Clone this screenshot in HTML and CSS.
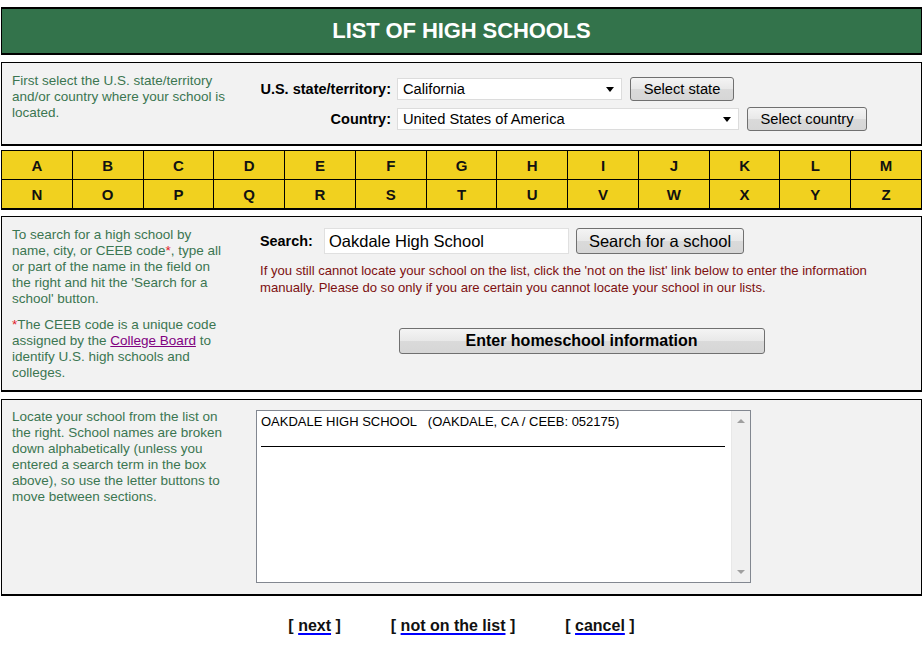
FILE: index.html
```html
<!DOCTYPE html>
<html lang="en">
<head>
<meta charset="utf-8">
<title>List of High Schools</title>
<link rel="stylesheet" href="styles.css">
</head>
<body>
<div class="page">
  <header class="banner"><h1 class="banner-title">LIST OF HIGH SCHOOLS</h1></header>

  <section class="panel panel-location">
    <p class="help">First select the U.S. state/territory<br>and/or country where your school is<br>located.</p>
    <div class="loc-form">
      <label class="field-label">U.S. state/territory:</label>
      <div class="field-row">
        <div class="select-box select-state"><span class="select-text">California</span><span class="select-arrow"></span></div>
        <button class="btn btn-small btn-state">Select state</button>
      </div>
      <label class="field-label">Country:</label>
      <div class="field-row">
        <div class="select-box select-country"><span class="select-text">United States of America</span><span class="select-arrow"></span></div>
        <button class="btn btn-small btn-country">Select country</button>
      </div>
    </div>
  </section>

  <nav class="letters">
    <a class="letter">A</a><a class="letter">B</a><a class="letter">C</a><a class="letter">D</a><a class="letter">E</a><a class="letter">F</a><a class="letter">G</a><a class="letter">H</a><a class="letter">I</a><a class="letter">J</a><a class="letter">K</a><a class="letter">L</a><a class="letter">M</a>
    <a class="letter">N</a><a class="letter">O</a><a class="letter">P</a><a class="letter">Q</a><a class="letter">R</a><a class="letter">S</a><a class="letter">T</a><a class="letter">U</a><a class="letter">V</a><a class="letter">W</a><a class="letter">X</a><a class="letter">Y</a><a class="letter">Z</a>
  </nav>

  <section class="panel panel-search">
    <div class="help">
      <p class="help-para">To search for a high school by<br>name, city, or CEEB code<span class="star">*</span>, type all<br>or part of the name in the field on<br>the right and hit the 'Search for a<br>school' button.</p>
      <p class="help-para"><span class="star">*</span>The CEEB code is a unique code<br>assigned by the <a class="cb-link">College Board</a> to<br>identify U.S. high schools and<br>colleges.</p>
    </div>
    <div class="search-side">
      <div class="search-row">
        <label class="search-label">Search:</label>
        <div class="text-input">Oakdale High School</div>
        <button class="btn btn-large">Search for a school</button>
      </div>
      <p class="notice">If you still cannot locate your school on the list, click the 'not on the list' link below to enter the information<br>manually. Please do so only if you are certain you cannot locate your school in our lists.</p>
      <div class="home-row"><button class="btn btn-home">Enter homeschool information</button></div>
    </div>
  </section>

  <section class="panel panel-list">
    <p class="help">Locate your school from the list on<br>the right. School names are broken<br>down alphabetically (unless you<br>entered a search term in the box<br>above), so use the letter buttons to<br>move between sections.</p>
    <div class="listbox">
      <div class="list-content">
        <div class="list-item">OAKDALE HIGH SCHOOL&nbsp;&nbsp; (OAKDALE, CA / CEEB: 052175)</div>
        <div class="list-rule"></div>
      </div>
      <div class="scrollbar">
        <span class="sb-arrow sb-up"></span>
        <span class="sb-arrow sb-down"></span>
      </div>
    </div>
  </section>

  <footer class="footer-links">
    <span class="fl">[ <a class="fl-link">next</a> ]</span>
    <span class="fl">[ <a class="fl-link">not on the list</a> ]</span>
    <span class="fl">[ <a class="fl-link">cancel</a> ]</span>
  </footer>
</div>
</body>
</html>
```
FILE: styles.css
```css
* { box-sizing: border-box; }
html, body { margin: 0; padding: 0; background: #fff; }
body { font-family: "Liberation Sans", Arial, sans-serif; color: #000; }
.page { width: 922px; padding: 7px 0 0 1px; }

.banner {
  height: 48px;
  background: #33734b;
  border: 1px solid #000;
  border-top-width: 2px;
  border-bottom-width: 2px;
  display: flex;
  align-items: center;
  justify-content: center;
}
.banner-title {
  margin: 0;
  color: #fff;
  font-size: 22px;
  font-weight: bold;
  letter-spacing: -0.1px;
}

.panel {
  background: #f2f2f2;
  border: 1px solid #000;
  border-bottom-width: 2px;
  display: grid;
  grid-template-columns: 246px 1fr;
  padding: 9px 10px 0 10px;
}
.help {
  margin: 0;
  font-size: 13.5px;
  line-height: 16px;
  color: #3b7651;
  white-space: nowrap;
}
.help-para { margin: 0 0 10px 0; }
.help-para:last-child { margin-bottom: 0; }
.star { color: #e0202a; }
.cb-link { color: #800080; text-decoration: underline; }

/* location panel */
.panel-location { margin-top: 7px; height: 84px; padding-top: 10px; }
.loc-form {
  margin-top: 4px;
  display: grid;
  grid-template-columns: 133px 1fr;
  column-gap: 6px;
  row-gap: 6px;
  align-items: center;
  align-content: start;
}
.field-label { font-size: 14.5px; font-weight: bold; text-align: right; white-space: nowrap; }
.field-row { display: flex; align-items: center; gap: 8px; }
.select-box {
  position: relative;
  height: 22px;
  background: #fff;
  border: 1px solid #dcdcdc;
  font-size: 14.7px;
  line-height: 20px;
  padding-left: 5px;
}
.select-state { width: 225px; }
.select-country { width: 342px; }
.select-arrow {
  position: absolute;
  right: 7px;
  top: 8px;
  width: 0; height: 0;
  border-left: 4px solid transparent;
  border-right: 4px solid transparent;
  border-top: 5px solid #000;
}
.btn {
  font-family: "Liberation Sans", Arial, sans-serif;
  color: #000;
  background: linear-gradient(#f4f4f4, #e8e8e8 50%, #dadada 51%, #d6d6d6);
  border: 1px solid #707070;
  border-radius: 3px;
  padding: 0;
}
.btn-small { height: 24px; font-size: 14.7px; }
.btn-state { width: 104px; }
.btn-country { width: 120px; }

/* letters */
.letters {
  margin-top: 4px;
  display: grid;
  grid-template-columns: repeat(13, 1fr);
  border-top: 1px solid #000;
  border-left: 1px solid #000;
  background: #f1d11f;
}
.letter {
  height: 29px;
  border-right: 1px solid #000;
  border-bottom: 1px solid #000;
  display: flex;
  align-items: center;
  justify-content: center;
  font-weight: bold;
  font-size: 15px;
  color: #111;
}
.letter:nth-child(n+14) { height: 30px; border-bottom-width: 2px; }

/* search panel */
.panel-search { margin-top: 6px; padding-top: 10px; padding-bottom: 9px; }
.search-side { padding-top: 1px; padding-left: 2px; }
.search-row { display: flex; align-items: center; }
.search-label { font-size: 14.4px; font-weight: bold; width: 64px; }
.text-input {
  width: 245px;
  height: 26px;
  background: #fff;
  border: 1px solid #e0e0e0;
  font-size: 16.5px;
  line-height: 24px;
  padding-left: 4px;
}
.btn-large { height: 26px; width: 168px; font-size: 16.5px; margin-left: 7px; }
.notice {
  margin: 8px 0 0 0;
  font-size: 13.1px;
  line-height: 17px;
  color: #7d1010;
  white-space: nowrap;
}
.home-row { display: flex; justify-content: center; margin-top: 32px; padding-right: 8px; }
.btn-home { width: 366px; height: 26px; font-size: 16px; font-weight: bold; }

/* list panel */
.panel-list { margin-top: 7px; padding-bottom: 11px; }
.listbox {
  margin-top: 1px;
  width: 495px;
  height: 173px;
  background: #fff;
  border: 1px solid #828790;
  display: flex;
  margin-left: -2px;
}
.list-content { flex: 1; padding: 3px 6px 0 4px; }
.list-item { font-size: 13px; line-height: 15px; white-space: nowrap; }
.list-rule { margin-top: 17px; border-top: 1px solid #000; }
.scrollbar {
  width: 19px;
  background: #f0f0f0;
  border-left: 1px solid #e8e8e8;
  display: flex;
  flex-direction: column;
  justify-content: space-between;
  align-items: center;
  padding: 8px 0 8px 0;
}
.sb-arrow { width: 0; height: 0; border-left: 4px solid transparent; border-right: 4px solid transparent; }
.sb-up { border-bottom: 4px solid #a0a0a0; }
.sb-down { border-top: 4px solid #a0a0a0; }

/* footer */
.footer-links {
  display: flex;
  justify-content: center;
  gap: 50px;
  margin-top: 21px;
  font-size: 16px;
  font-weight: bold;
}
.fl { color: #111; }
.fl-link {
  color: #111;
  text-decoration: underline;
  text-decoration-color: #0000ff;
  text-decoration-thickness: 2px;
  text-underline-offset: 2px;
}
```
